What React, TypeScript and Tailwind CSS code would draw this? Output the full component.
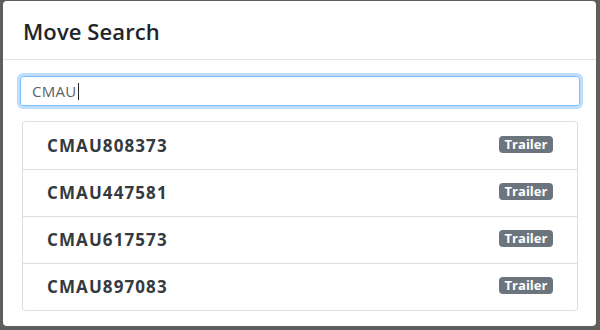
import React from "react";

const items = ["CMAU808373", "CMAU447581", "CMAU617573", "CMAU897083"];

export default function App() {
    return (
        <div
            className="w-[600px] h-[330px] bg-[#5e5e5e] pt-[1px] pl-[3px] overflow-hidden"
            style={{ fontFamily: '"Open Sans", "Noto Sans", sans-serif' }}
        >
            <div className="w-[593px] h-[325px] bg-white rounded-[4px] flex flex-col">
                <div className="h-[59px] border-b border-[#e3e6e9] flex items-center px-[20px]">
                    <h1 className="text-[22px] font-semibold text-[#212529] leading-none tracking-[0.1px] mt-[2px]">
                        Move Search
                    </h1>
                </div>
                <div className="pl-[17px] pr-[16px] pt-[16px]">
                    <div className="h-[30px] border border-[#80bdff] rounded-[3px] shadow-[0_0_0_3px_rgba(0,123,255,0.25)] flex items-center px-[11px]">
                        <span className="text-[15px] text-[#5a6168] leading-none tracking-[0.3px]">CMAU</span>
                        <span className="w-[1px] h-[17px] bg-[#222] ml-[1px]"></span>
                    </div>
                    <div className="mt-[15px] mx-[2px] border border-[#dcdfe2] rounded-[3px]">
                        {items.map((id, i) => (
                            <div
                                key={id}
                                className={`h-[47px] flex items-center justify-between pl-[24px] pr-[24px] ${
                                    i > 0 ? "border-t border-[#dcdfe2]" : ""
                                }`}
                            >
                                <span className="text-[17px] font-bold text-[#343a40] tracking-[1.1px]">
                                    {id}
                                </span>
                                <span className="h-[17px] w-[54px] flex items-center justify-center bg-[#6c757d] text-white text-[13px] font-bold rounded-[4px] leading-none mb-[3px]">
                                    Trailer
                                </span>
                            </div>
                        ))}
                    </div>
                </div>
            </div>
        </div>
    );
}
